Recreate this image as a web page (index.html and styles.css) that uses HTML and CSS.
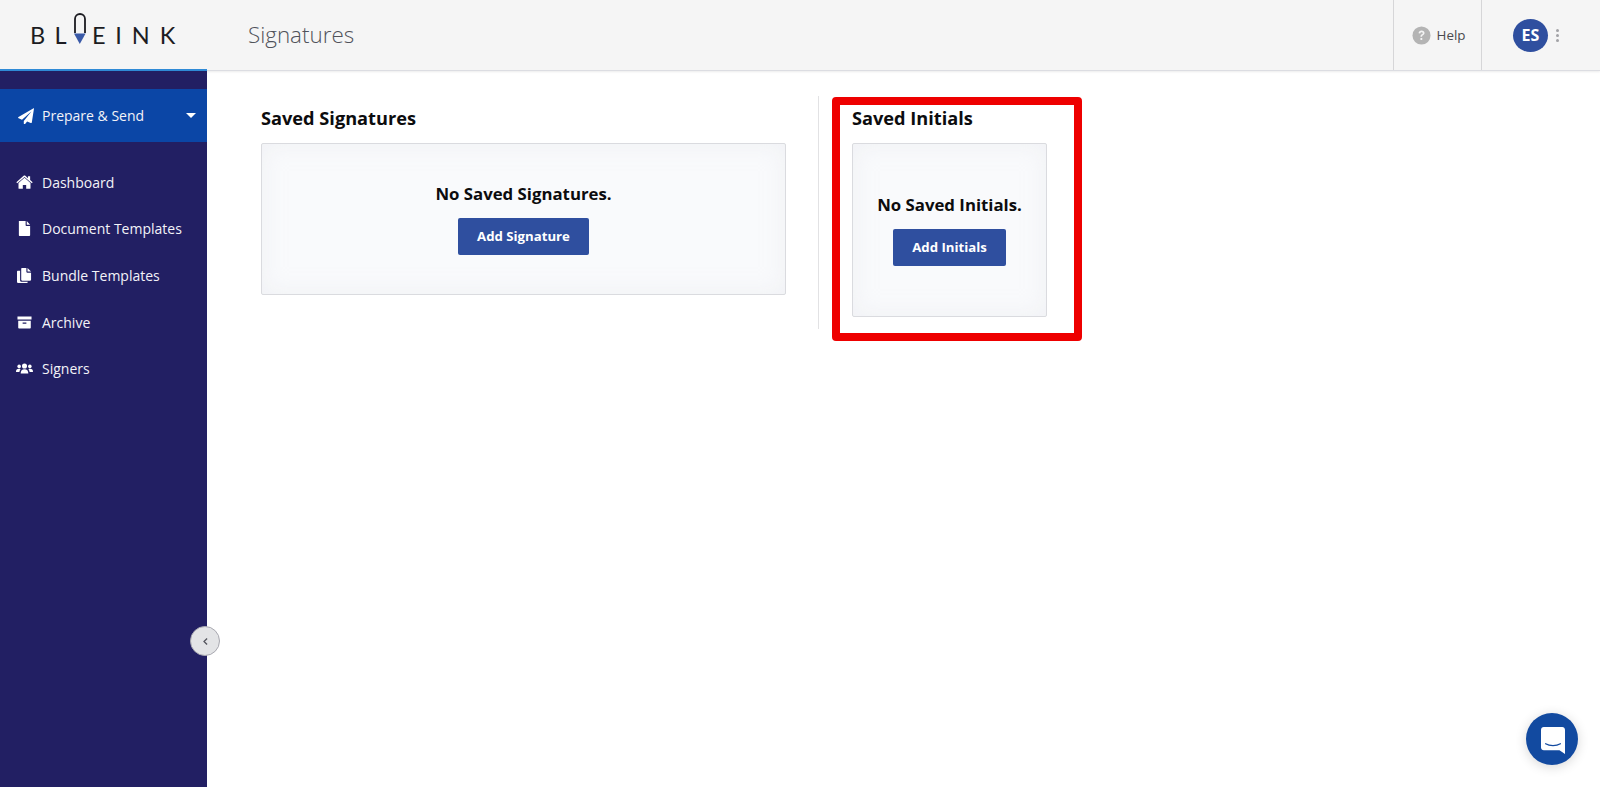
FILE: index.html
```html
<!DOCTYPE html>
<html lang="en">
<head>
<meta charset="utf-8">
<title>Signatures</title>
<link rel="stylesheet" href="styles.css">
</head>
<body>
<header class="topbar">
  <div class="logo">
    <span class="logo-text">BL</span>
    <svg class="logo-u" viewBox="0 0 16 32" width="16" height="32"><path d="M3 20V6a5 5 0 0 1 10 0V20" fill="none" stroke="#1c1c22" stroke-width="1.800"/><path d="M2 20.500h11.600L7.800 31z" fill="#3a5aa8"/></svg>
    <span class="logo-text logo-end">EINK</span>
  </div>
  <h1 class="page-title">Signatures</h1>
  <div class="top-actions">
    <div class="help">
      <svg class="help-icon" viewBox="0 0 20 20" width="19" height="19"><circle cx="10" cy="10" r="9.500" fill="#b4b4b4"/><path d="M6.900 7.600c.2-1.800 1.500-2.800 3.200-2.800 1.800 0 3.100 1.100 3.100 2.600 0 1.200-.7 1.800-1.600 2.400-.8.500-1 .8-1 1.600H8.900c0-1.300.4-2 1.400-2.600.7-.4 1-.8 1-1.300 0-.6-.5-1-1.200-1-.8 0-1.200.5-1.400 1.300z" fill="#f4f4f4"/><rect x="8.900" y="12.600" width="1.900" height="2.100" fill="#f4f4f4"/></svg>
      <span>Help</span>
    </div>
    <div class="user">
      <span class="avatar">ES</span>
      <span class="kebab"><i></i><i></i><i></i></span>
    </div>
  </div>
</header>
<div class="shell">
  <nav class="sidebar">
    <div class="prepare">
      <svg class="nav-icon" viewBox="0 0 16 16" width="16" height="16"><path d="M15.600.2.500 8.900c-.6.400-.5 1.200.1 1.400l3.400 1.400 9.600-8.400-7.800 9.600v2.600c0 .7.800 1 1.300.5l2-2.500 3.600 1.500c.5.2 1-.1 1.100-.6L16 .6c0-.3-.2-.5-.4-.4z" fill="#fff"/></svg>
      <span class="nav-label">Prepare &amp; Send</span>
      <span class="caret"></span>
    </div>
    <ul class="nav-list">
      <li class="nav-item">
        <svg class="nav-icon" viewBox="0 0 18 16" width="17" height="15"><path d="M9 3 2.600 8.400V14c0 .4.3.7.7.7h3.900v-4h3.600v4h3.900c.4 0 .7-.3.7-.7V8.400zM17.700 7.600 15 5.300V1.200h-2.300v2.200L9.900.9c-.5-.4-1.300-.4-1.800 0L.3 7.600l.9 1.100L9 2.200l7.800 6.500z" fill="#fff"/></svg>
        <span class="nav-label">Dashboard</span>
      </li>
      <li class="nav-item">
        <svg class="nav-icon" viewBox="0 0 16 16" width="15" height="15"><path d="M2 0h7.200v4.600c0 .4.3.7.7.7H14v9.600c0 .6-.5 1.100-1 1.100H3c-.6 0-1-.5-1-1.100zM10.400 0 14 3.900h-3.600z" fill="#fff"/></svg>
        <span class="nav-label">Document Templates</span>
      </li>
      <li class="nav-item">
        <svg class="nav-icon" viewBox="0 0 16 16" width="15" height="15"><path d="M5.500 0h4.500v4c0 .5.400 1 1 1h4v7.500c0 .5-.4 1-1 1H5.500c-.6 0-1-.5-1-1V1c0-.5.4-1 1-1zM11.200 0 15 3.800h-3.800zM1 3h2.300v10c0 1 .8 1.700 1.700 1.700h6.500V15c0 .6-.4 1-1 1H1c-.5 0-1-.4-1-1V4c0-.6.5-1 1-1z" fill="#fff"/></svg>
        <span class="nav-label">Bundle Templates</span>
      </li>
      <li class="nav-item">
        <svg class="nav-icon" viewBox="0 0 16 16" width="15" height="15"><path d="M.5 1.500h15v3.300H.5zM1.300 6h13.400v7.700c0 .5-.4.800-.8.800H2.100c-.4 0-.8-.3-.8-.8zm4.700 2v1.300h4V8z" fill="#fff" fill-rule="evenodd"/></svg>
        <span class="nav-label">Archive</span>
      </li>
      <li class="nav-item">
        <svg class="nav-icon" viewBox="0 0 20 14" width="18" height="13"><circle cx="10" cy="4" r="3" fill="#fff"/><circle cx="3.700" cy="4.500" r="2.100" fill="#fff"/><circle cx="16.300" cy="4.500" r="2.100" fill="#fff"/><path d="M5.500 13c0-3.300 1.500-5 4.500-5s4.500 1.700 4.500 5zM0 11c0-2.500 1-3.700 3.500-3.700.8 0 1.300.2 1.800.5C4.500 8.700 4.200 9.700 4 11zM20 11c0-2.500-1-3.700-3.500-3.700-.8 0-1.300.2-1.800.5.800.9 1.100 1.900 1.300 3.200z" fill="#fff"/></svg>
        <span class="nav-label">Signers</span>
      </li>
    </ul>
  </nav>
  <main class="content">
    <section class="panel panel-signatures">
      <h2 class="panel-title">Saved Signatures</h2>
      <div class="empty-card card-wide">
        <p class="empty-text">No Saved Signatures.</p>
        <button class="btn btn-signature" type="button">Add Signature</button>
      </div>
    </section>
    <section class="panel panel-initials">
      <h2 class="panel-title">Saved Initials</h2>
      <div class="empty-card card-narrow">
        <p class="empty-text">No Saved Initials.</p>
        <button class="btn btn-initials" type="button">Add Initials</button>
      </div>
      <div class="highlight"></div>
    </section>
  </main>
  <button class="collapse" type="button" aria-label="Collapse">
    <svg viewBox="0 0 8 10" width="7" height="9"><path d="M5.800 1.500 2.300 5l3.500 3.500" fill="none" stroke="#55565e" stroke-width="1.500"/></svg>
  </button>
</div>
<button class="chat" type="button" aria-label="Chat">
  <svg viewBox="0 0 26 29" width="24" height="27"><path d="M3 0h20c1.700 0 3 1.300 3 3v26l-6-4H3c-1.700 0-3-1.300-3-3V3c0-1.700 1.300-3 3-3z" fill="#fff"/><path d="M5 18c4.500 2.600 11.500 2.600 16 0" fill="none" stroke="#124aa0" stroke-width="1.400" stroke-linecap="round"/></svg>
</button>
</body>
</html>
```

FILE: styles.css
```css
* { box-sizing: border-box; }
html, body { height: 100%; }
body {
  margin: 0;
  height: 787px;
  overflow: hidden;
  display: flex;
  flex-direction: column;
  background: #fff;
  font-family: "Open Sans", "Liberation Sans", sans-serif;
  color: #0c0c0e;
}
.topbar {
  height: 71px;
  flex: none;
  display: flex;
  align-items: center;
  background: #f5f5f5;
  border-bottom: 1px solid #dcdde2;
  box-shadow: 0 1px 2px rgba(0, 0, 0, .08);
  position: relative;
  z-index: 2;
}
.logo {
  width: 248px;
  padding-left: 30px;
  height: 100%;
  flex: none;
  display: flex;
  align-items: flex-start;
}
.logo-text {
  font-family: "Lato", "Open Sans", sans-serif;
  font-size: 23.500px;
  line-height: 25px;
  margin-top: 23px;
  letter-spacing: 9.300px;
  color: #1c1c22;
}
.logo-u { margin: 13px 0 0 -4px; flex: none; }
.logo-end { margin-left: 4px; letter-spacing: 9.900px; }
.page-title {
  margin: 0 0 2px;
  font-size: 22.400px;
  font-weight: 300;
  color: #50525a;
}
.top-actions {
  margin-left: auto;
  height: 100%;
  display: flex;
}
.help {
  width: 89px;
  display: flex;
  align-items: center;
  justify-content: center;
  gap: 6px;
  padding-left: 2px;
  border-left: 1px solid #d6d6d8;
  border-right: 1px solid #d6d6d8;
  font-size: 13.400px;
  color: #4a4a4e;
}
.user {
  width: 118px;
  display: flex;
  align-items: center;
  padding-left: 31px;
  gap: 8px;
}
.avatar {
  width: 35px;
  height: 33px;
  border-radius: 50%;
  background: #2f4f9f;
  color: #fff;
  font-size: 16px;
  font-weight: 700;
  display: flex;
  align-items: center;
  justify-content: center;
}
.kebab { display: flex; flex-direction: column; gap: 2px; }
.kebab i { width: 3px; height: 3px; border-radius: 50%; background: #a2a2a6; display: block; }
.shell {
  flex: 1;
  display: flex;
  position: relative;
  min-height: 0;
}
.sidebar {
  width: 207px;
  flex: none;
  background: #221f63;
  border-top: 2px solid #2f8ad6;
  margin-top: -2px;
  padding-top: 18px;
  position: relative;
  z-index: 3;
  color: #fff;
}
.prepare {
  height: 53px;
  background: #0b46a6;
  display: flex;
  align-items: center;
  padding: 0 11px 0 18px;
}
.caret {
  margin-left: auto;
  border-left: 5px solid transparent;
  border-right: 5px solid transparent;
  border-top: 5px solid #fff;
}
.nav-list {
  list-style: none;
  margin: 17px 0 0;
  padding: 0;
}
.nav-item {
  height: 46.600px;
  display: flex;
  align-items: center;
  padding-left: 16px;
}
.nav-icon { flex: none; margin-right: 8px; }
.nav-item .nav-icon { width: 17px; margin-right: 9px; }
.nav-label { font-size: 14px; color: #f3f3f8; }
.content {
  flex: 1;
  display: flex;
  align-items: flex-start;
  padding: 25px 0 0 54px;
}
.panel { position: relative; }
.panel-signatures {
  width: 558px;
  height: 233px;
  padding-right: 33px;
  border-right: 1px solid #e2e2e4;
}
.panel-initials { padding-left: 33px; }
.panel-title {
  margin: 0;
  font-size: 18.200px;
  font-weight: 700;
  line-height: 44px;
  height: 47px;
  color: #0c0c0e;
}
.empty-card {
  display: flex;
  flex-direction: column;
  align-items: center;
  justify-content: center;
  padding-bottom: 2px;
  border: 1px solid #dadbdf;
  border-radius: 2px;
  background: #f9fafc;
  box-shadow: inset 0 0 22px rgba(232, 234, 238, .5);
}
.card-wide { width: 525px; height: 152px; }
.card-narrow { width: 195px; height: 174px; }
.empty-text {
  margin: 0 0 12px;
  font-size: 16.800px;
  font-weight: 700;
  line-height: 24px;
}
.btn {
  height: 37px;
  border: 0;
  border-radius: 2px;
  background: #2f4f9f;
  color: #fff;
  font-family: inherit;
  font-size: 13.200px;
  font-weight: 700;
  padding: 0;
}
.btn-signature { width: 131px; }
.btn-initials { width: 113px; }
.highlight {
  position: absolute;
  left: 13px;
  top: 1px;
  width: 250px;
  height: 244px;
  border: 8px solid #ee0000;
  border-radius: 4px;
  pointer-events: none;
}
.collapse {
  position: absolute;
  left: 190px;
  top: 555px;
  width: 30px;
  height: 30px;
  border-radius: 50%;
  border: 1px solid #a8a8b0;
  background: #e3e4e6;
  padding: 0;
  display: flex;
  align-items: center;
  justify-content: center;
  z-index: 4;
}
.chat {
  position: absolute;
  left: 1526px;
  top: 713px;
  width: 52px;
  height: 52px;
  border: 0;
  border-radius: 50%;
  background: #124aa0;
  box-shadow: 0 2px 12px rgba(0, 0, 0, .16);
  padding: 2px 0 0 2px;
  display: flex;
  align-items: center;
  justify-content: center;
}
```
